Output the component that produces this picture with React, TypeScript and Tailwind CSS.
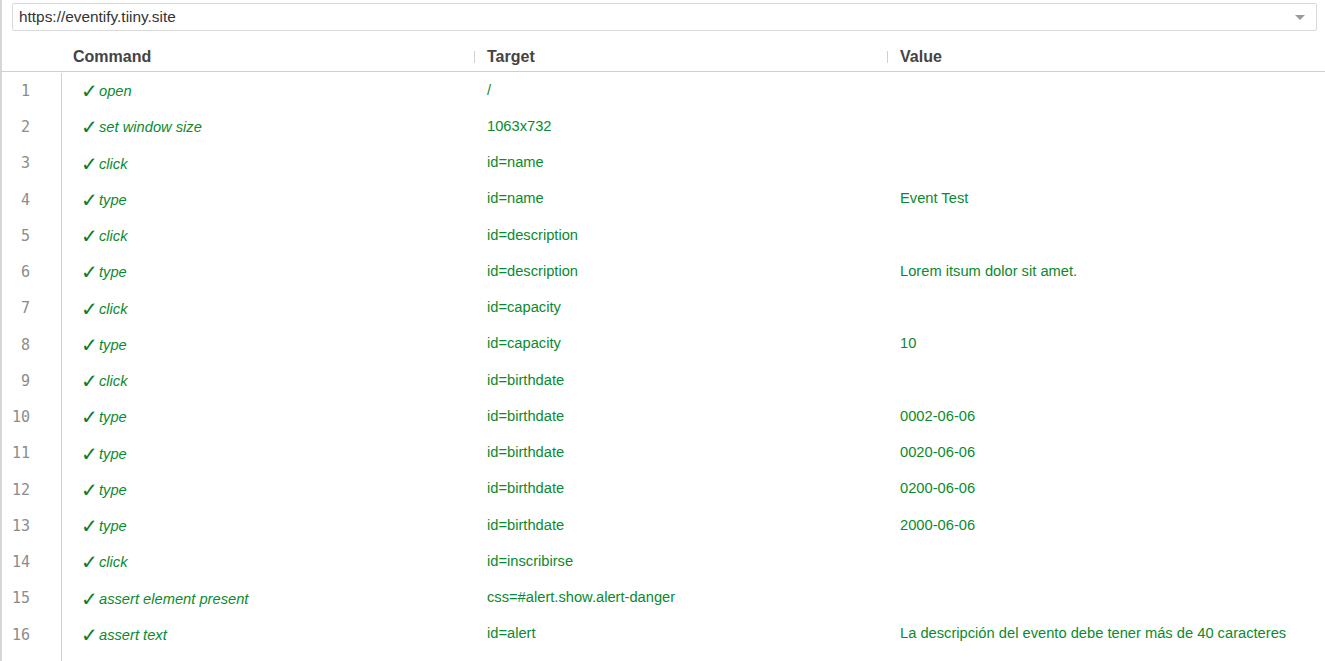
const rows: [string, string, string][] = [
  ["open", "/", ""],
  ["set window size", "1063x732", ""],
  ["click", "id=name", ""],
  ["type", "id=name", "Event Test"],
  ["click", "id=description", ""],
  ["type", "id=description", "Lorem itsum dolor sit amet."],
  ["click", "id=capacity", ""],
  ["type", "id=capacity", "10"],
  ["click", "id=birthdate", ""],
  ["type", "id=birthdate", "0002-06-06"],
  ["type", "id=birthdate", "0020-06-06"],
  ["type", "id=birthdate", "0200-06-06"],
  ["type", "id=birthdate", "2000-06-06"],
  ["click", "id=inscribirse", ""],
  ["assert element present", "css=#alert.show.alert-danger", ""],
  ["assert text", "id=alert", "La descripción del evento debe tener más de 40 caracteres"],
];

export default function App() {
  return (
    <div className="h-[661px] w-[1325px] overflow-hidden border-l-2 border-[#d6d6d6] bg-white font-['Liberation_Sans',Arial,sans-serif] text-[14.7px]">
      {/* URL bar */}
      <div className="pl-[10px] pr-[8px] pt-[3px]">
        <div className="flex h-[28px] items-center justify-between rounded-[2px] border border-[#d9d9d9] pl-[6px] pr-[11px] text-[15.4px] text-[#333]">
          <span>https://eventify.tiiny.site</span>
          <span className="h-0 w-0 border-x-[5px] border-t-[5px] border-x-transparent border-t-[#9a9a9a]" />
        </div>
      </div>

      {/* Header */}
      <div className="mt-[9px] grid h-[32px] grid-cols-[60px_412px_413px_1fr] items-center border-b border-[#d0d0d0] pt-[2px] text-[16px] font-bold text-[#444]">
        <div />
        <div className="pl-[11px]">Command</div>
        <div className="flex items-center">
          <span className="h-[12px] w-px bg-[#d0d0d0]" />
          <span className="pl-[12px]">Target</span>
        </div>
        <div className="flex items-center">
          <span className="h-[12px] w-px bg-[#d0d0d0]" />
          <span className="pl-[12px]">Value</span>
        </div>
      </div>

      {/* Rows */}
      <div className="grid grid-cols-[60px_412px_413px_1fr] pt-[1px]">
        <div className="flex h-[589px] flex-col border-r border-[#d0d0d0]">
          {rows.map((_, i) => (
            <div
              key={i}
              className="flex h-[36.25px] shrink-0 items-center justify-end pr-[31px] font-['DejaVu_Sans_Mono',monospace] text-[15px] text-[#8c8c8c]"
            >
              {i + 1}
            </div>
          ))}
        </div>
        <div className="flex flex-col">
          {rows.map((r, i) => (
            <div key={i} className="flex h-[36.25px] shrink-0 items-center pl-[19px] text-[#0a8a2e]">
              <span className="w-[18px] font-['DejaVu_Sans',sans-serif] text-[20px] font-bold leading-none text-[#0b7d26]">✓</span>
              <span className="italic">{r[0]}</span>
            </div>
          ))}
        </div>
        <div className="flex flex-col">
          {rows.map((r, i) => (
            <div key={i} className="flex h-[36.25px] shrink-0 items-center pb-[3px] pl-[13px] text-[#0a8a2e]">
              {r[1]}
            </div>
          ))}
        </div>
        <div className="flex flex-col">
          {rows.map((r, i) => (
            <div key={i} className="flex h-[36.25px] shrink-0 items-center pb-[3px] pl-[13px] text-[#0a8a2e]">
              {r[2]}
            </div>
          ))}
        </div>
      </div>
    </div>
  );
}
